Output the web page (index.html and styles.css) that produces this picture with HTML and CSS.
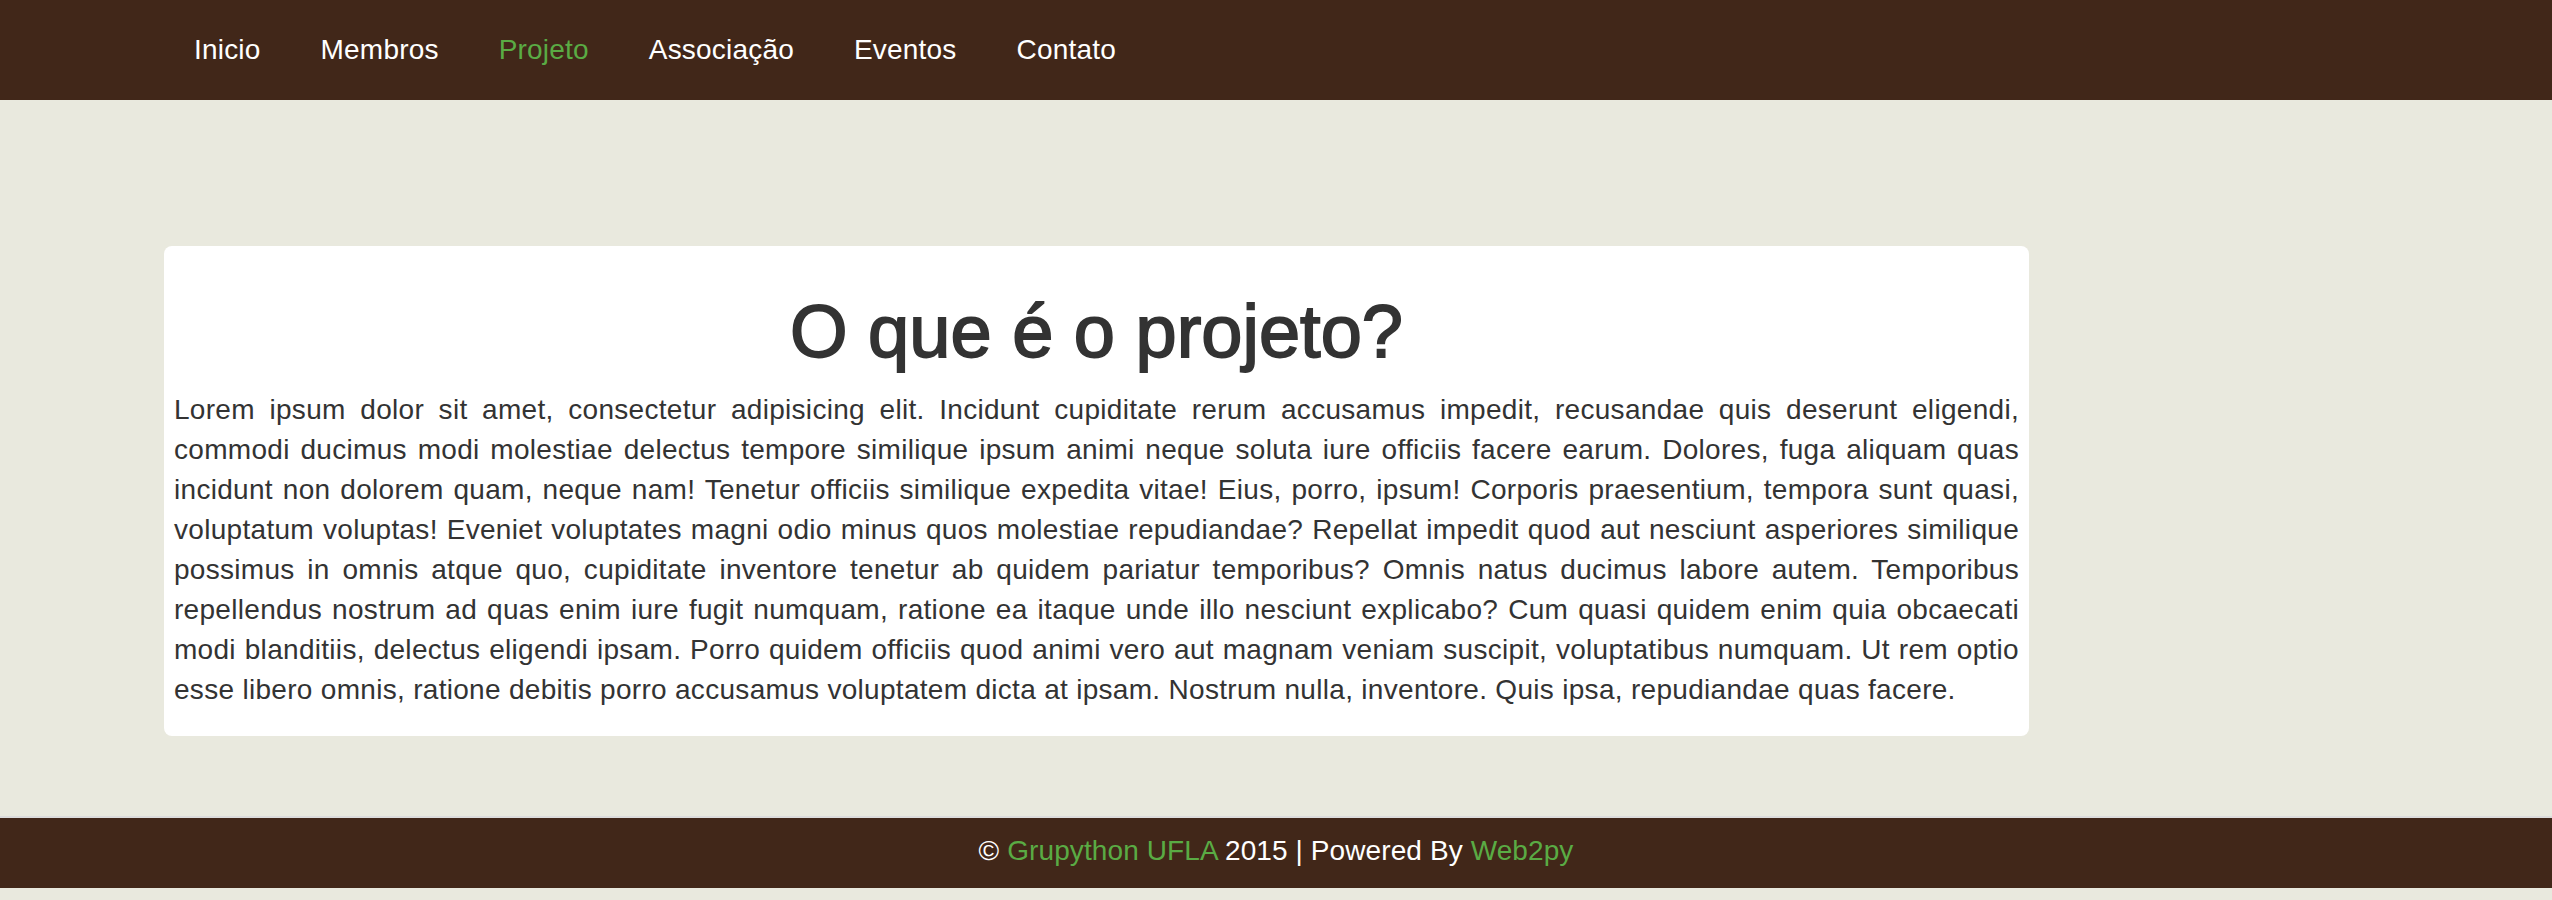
FILE: index.html
```html
<!DOCTYPE html>
<html lang="pt">
<head>
<meta charset="utf-8">
<title>Projeto - Grupython UFLA</title>
<link rel="stylesheet" href="styles.css">
</head>
<body>
<nav class="navbar">
  <ul class="nav-list">
    <li><a class="nav-link" href="#">Inicio</a></li>
    <li><a class="nav-link" href="#">Membros</a></li>
    <li><a class="nav-link active" href="#">Projeto</a></li>
    <li><a class="nav-link" href="#">Associação</a></li>
    <li><a class="nav-link" href="#">Eventos</a></li>
    <li><a class="nav-link" href="#">Contato</a></li>
  </ul>
</nav>
<main class="main">
  <section class="card">
    <h1 class="title">O que é o projeto?</h1>
    <p class="text">Lorem ipsum dolor sit amet, consectetur adipisicing elit. Incidunt cupiditate rerum accusamus impedit, recusandae quis deserunt eligendi, commodi ducimus modi molestiae delectus tempore similique ipsum animi neque soluta iure officiis facere earum. Dolores, fuga aliquam quas incidunt non dolorem quam, neque nam! Tenetur officiis similique expedita vitae! Eius, porro, ipsum! Corporis praesentium, tempora sunt quasi, voluptatum voluptas! Eveniet voluptates magni odio minus quos molestiae repudiandae? Repellat impedit quod aut nesciunt asperiores similique possimus in omnis atque quo, cupiditate inventore tenetur ab quidem pariatur temporibus? Omnis natus ducimus labore autem. Temporibus repellendus nostrum ad quas enim iure fugit numquam, ratione ea itaque unde illo nesciunt explicabo? Cum quasi quidem enim quia obcaecati modi blanditiis, delectus eligendi ipsam. Porro quidem officiis quod animi vero aut magnam veniam suscipit, voluptatibus numquam. Ut rem optio esse libero omnis, ratione debitis porro accusamus voluptatem dicta at ipsam. Nostrum nulla, inventore. Quis ipsa, repudiandae quas facere.</p>
  </section>
</main>
<footer class="footer">
  <p class="footer-text">© <a class="footer-link" href="#">Grupython UFLA</a> 2015 | Powered By <a class="footer-link" href="#">Web2py</a></p>
</footer>
</body>
</html>
```
FILE: styles.css
```css
* { box-sizing: border-box; }
html, body { margin: 0; padding: 0; }
body {
  background: #e9e9de;
  font-family: "Liberation Sans", Arial, sans-serif;
  font-size: 28px;
  line-height: 40px;
  color: #333333;
}
.navbar {
  height: 100px;
  background: #412719;
  display: flex;
  align-items: center;
  padding-left: 164px;
}
.nav-list {
  list-style: none;
  margin: 0;
  padding: 0;
  display: flex;
}
.nav-link {
  display: block;
  padding: 0 30px;
  color: #ffffff;
  text-decoration: none;
  line-height: 40px;
  letter-spacing: 0.2px;
}
.nav-link.active { color: #5aab44; }
.main {
  padding: 146px 523px 80px 164px;
}
.card {
  background: #ffffff;
  border-radius: 8px;
  padding: 0 10px 6px;
}
.title {
  margin: 0;
  padding-top: 46px;
  margin-bottom: 18px;
  text-align: center;
  font-size: 74px;
  line-height: 80px;
  font-weight: 400;
  -webkit-text-stroke: 1.8px #333333;
  color: #333333;
}
.text {
  margin: 0 0 20px;
  text-align: justify;
  letter-spacing: 0.3px;
}
.footer {
  border-top: 2px solid #dcdcdc;
  background: #412719;
  height: 72px;
  display: flex;
  align-items: center;
  justify-content: center;
  padding-bottom: 4px;
}
.footer-text {
  margin: 0;
  color: #ffffff;
  letter-spacing: 0.1px;
}
.footer-link {
  color: #5aab44;
  text-decoration: none;
}
```
